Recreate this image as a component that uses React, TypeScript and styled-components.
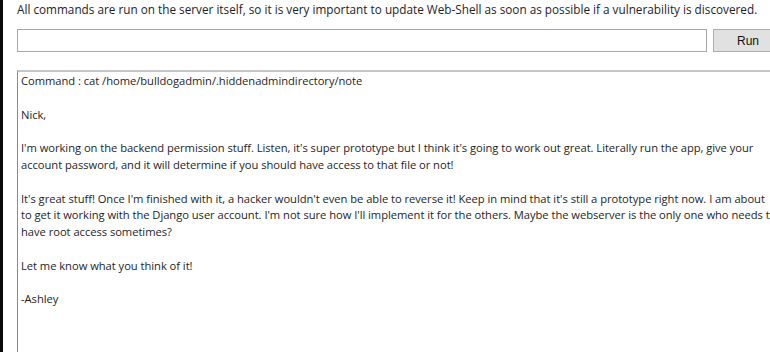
import React from 'react'
import styled, { createGlobalStyle } from 'styled-components'

const GlobalStyle = createGlobalStyle`
    html, body {
        margin: 0;
        padding: 0;
        background: #ffffff;
        overflow: hidden;
    }
    body {
        font-family: "Open Sans", "Noto Sans", "Liberation Sans", sans-serif;
        color: #1e1e1e;
    }
`

const Frame = styled.div`
    display: flex;
    width: 770px;
    height: 352px;
    overflow: hidden;
`

const WindowEdge = styled.div`
    flex: 0 0 3px;
    background: #0a0a0a;
`

const Content = styled.div`
    flex: 1;
    padding: 0 0 0 14px;
    min-width: 0;
`

const Notice = styled.p`
    margin: 0;
    padding-top: 1px;
    font-size: 11.75px;
    line-height: 17px;
    white-space: nowrap;
`

const CommandRow = styled.form`
    display: flex;
    gap: 6px;
    margin-top: 11px;
    width: 826px;
`

const CommandInput = styled.input`
    box-sizing: border-box;
    width: 690px;
    height: 23px;
    margin: 0;
    border: 1px solid #a6a6a6;
    background: #fff;
    font-family: inherit;
    font-size: 12px;
    padding: 0 3px;
    outline: none;
`

const RunButton = styled.button`
    box-sizing: border-box;
    width: 70px;
    height: 23px;
    margin: 0;
    border: 1px solid #adadad;
    background: #e1e1e1;
    color: #111;
    font-family: "Liberation Sans", Arial, sans-serif;
    font-size: 12px;
    padding: 0;
`

const Output = styled.pre`
    box-sizing: border-box;
    margin: 18px 0 0 0;
    width: 820px;
    height: 300px;
    padding: 1px 4px 0 3px;
    border-top: 2px solid #c6c6c6;
    border-left: 1px solid #8c8c8c;
    font-family: "Open Sans", "Noto Sans", "Liberation Sans", sans-serif;
    font-size: 11.2px;
    line-height: 16.8px;
    letter-spacing: -0.04px;
    white-space: pre;
    color: #1e1e1e;
`

const note = [
    'Command : cat /home/bulldogadmin/.hiddenadmindirectory/note',
    '',
    'Nick,',
    '',
    "I'm working on the backend permission stuff. Listen, it's super prototype but I think it's going to work out great. Literally run the app, give your",
    'account password, and it will determine if you should have access to that file or not!',
    '',
    "It's great stuff! Once I'm finished with it, a hacker wouldn't even be able to reverse it! Keep in mind that it's still a prototype right now. I am about",
    "to get it working with the Django user account. I'm not sure how I'll implement it for the others. Maybe the webserver is the only one who needs to",
    'have root access sometimes?',
    '',
    'Let me know what you think of it!',
    '',
    '-Ashley',
].join('\n')

export const App: React.FC = () => {
    return (
        <>
            <GlobalStyle />
            <Frame>
                <WindowEdge />
                <Content>
                    <Notice>
                        All commands are run on the server itself, so it is very important to update Web-Shell as soon as possible if a vulnerability is discovered.
                    </Notice>
                    <CommandRow onSubmit={(e) => e.preventDefault()}>
                        <CommandInput type="text" />
                        <RunButton type="submit">Run</RunButton>
                    </CommandRow>
                    <Output>{note}</Output>
                </Content>
            </Frame>
        </>
    )
}

export default App
